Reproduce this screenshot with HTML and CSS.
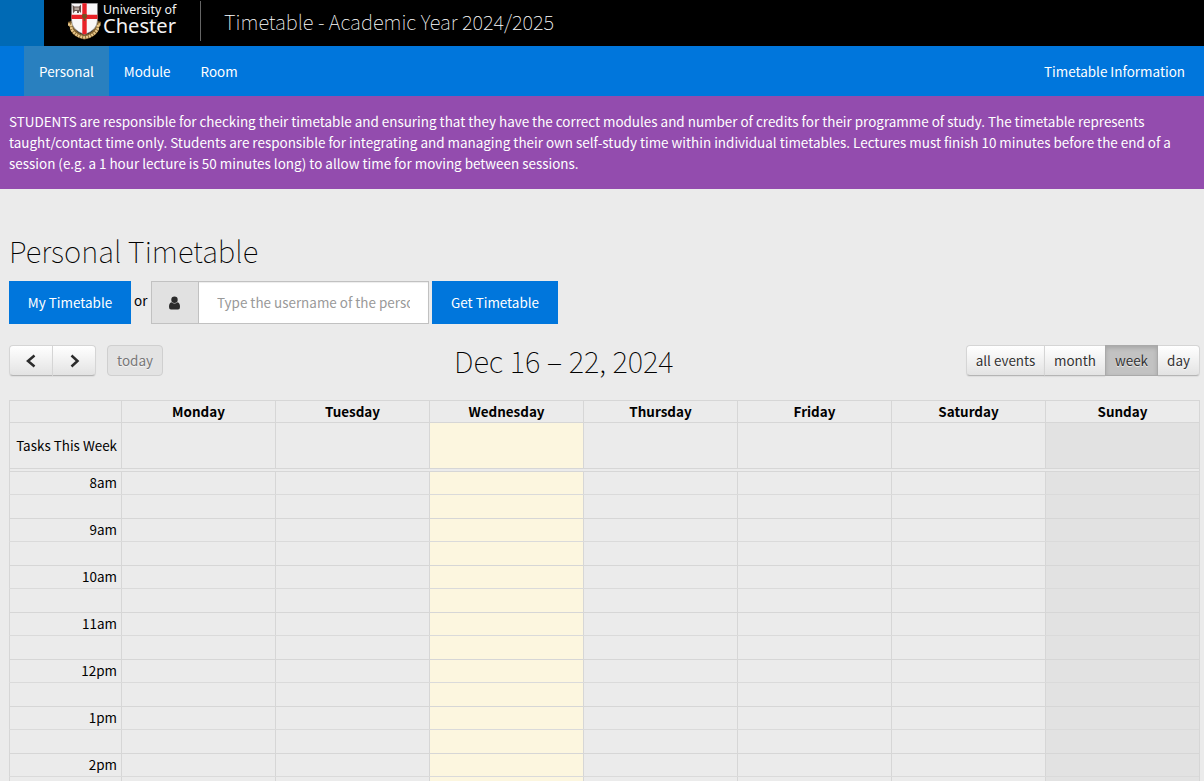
FILE: index.html
```
<!DOCTYPE html>
<html lang="en">
<head>
<meta charset="utf-8">
<title>Timetable - Academic Year 2024/2025</title>
<link rel="stylesheet" href="styles.css">
</head>
<body>
<header class="masthead">
  <div class="corner"></div>
  <div class="logo">
    <svg class="crest" width="36" height="38" viewBox="0 0 36 38">
      <path d="M1.500 21.500L5 20.500L5.500 26Q9 33 17.500 34Q26 33 29.500 26L30 20.500L33.500 21.500" fill="none" stroke="#80602f" stroke-width="5"/>
      <path d="M1 21.500L4 21.500L4.500 26.500Q9 33.500 17.500 34.500Q26 33.500 30.500 26.500L31 21.500L34 21.500" fill="none" stroke="#e9c98b" stroke-width="2.600" stroke-dasharray="2 .8"/>
      <path d="M4.500 .3H30.500V17Q30.500 27 17.500 31.500Q4.500 27 4.500 17Z" fill="#f8f7f8" stroke="#777" stroke-width=".6"/>
      <path d="M15.300 .3H19.700V30.700L17.500 31.500L15.300 30.700ZM4.500 11.800H30.500V16H4.500Z" fill="#e82127"/>
      <path d="M5.500 2L7.500 3.500H12L14 1.500V10L12 8V10H10V8H8L6 10.500Z" fill="#67554f"/>
      <path d="M7.500 4.500H12V7H7.500Z" fill="#b5a49b"/>
      <path d="M15.500 11H19.500L20 14L18.200 16V18H16.800V16L15 14Z" fill="#745323"/>
    </svg>
    <div class="wordmark"><span class="uni">University of</span><span class="chester">Chester</span></div>
  </div>
  <div class="site-title"><span class="t-site">Timetable - Academic Year 2024/2025</span></div>
</header>
<nav class="navbar">
  <a class="active">Personal</a><a>Module</a><a>Room</a><a class="info">Timetable Information</a>
</nav>
<div class="notice">
  <div class="n1">STUDENTS are responsible for checking their timetable and ensuring that they have the correct modules and number of credits for their programme of study. The timetable represents</div>
  <div>taught/contact time only. Students are responsible for integrating and managing their own self-study time within individual timetables. Lectures must finish 10 minutes before the end of a</div>
  <div>session (e.g. a 1 hour lecture is 50 minutes long) to allow time for moving between sessions.</div>
</div>
<main>
  <h1>Personal Timetable</h1>
  <form class="search">
    <button type="button" class="btn mine">My Timetable</button>
    <span class="or">or</span>
    <span class="addon"><svg width="12" height="14" viewBox="0 0 12 14"><circle cx="5.500" cy="3.700" r="3.200" fill="#2b2b2b"/><path d="M2.500 6.200Q0 6.600 0 11Q0 13.500 2 13.500H9Q11 13.500 11 11Q11 6.600 8.500 6.200Q5.500 9 2.500 6.200Z" fill="#2b2b2b"/></svg></span>
    <input type="text" placeholder="Type the username of the person">
    <button type="button" class="btn get">Get Timetable</button>
  </form>
  <div class="toolbar">
    <div class="group arrows">
      <button type="button" class="tb"><svg width="11" height="14" viewBox="0 0 11 14"><path d="M8.500 1.500L2 7L8.500 12.500" fill="none" stroke="#2b2b2b" stroke-width="2.500"/></svg></button>
      <button type="button" class="tb"><svg width="11" height="14" viewBox="0 0 11 14"><path d="M2.500 1.500L8.500 7L2.500 12.500" fill="none" stroke="#2b2b2b" stroke-width="2.500"/></svg></button>
    </div>
    <div class="group today"><button type="button" class="tb">today</button></div>
    <h2>Dec 16 – 22, 2024</h2>
    <div class="group views">
      <button type="button" class="tb v1">all events</button>
      <button type="button" class="tb v2">month</button>
      <button type="button" class="tb v3 on">week</button>
      <button type="button" class="tb v4">day</button>
    </div>
  </div>
  <div class="calendar" id="calendar"></div>
</main>
<script src="calendar.js"></script>
</body>
</html>
```
FILE: styles.css
```
* { box-sizing: border-box; }
body {
  margin: 0;
  height: 781px;
  overflow: hidden;
  background: #ebebeb;
  color: #000;
  font: 13.44px/21px "Noto Sans CJK SC", sans-serif;
}
h1, h2 { margin: 0; font-weight: 100; }
button, input { font: inherit; margin: 0; }

.masthead { display: flex; height: 46px; background: #000; color: #fff; }
.corner { width: 44px; background: #006ab5; }
.logo { display: flex; width: 156px; padding: 3px 0 0 23px; }
.crest { flex: none; }
.wordmark { display: flex; flex-direction: column; font-family: "Noto Sans", sans-serif; color: #f2f2f2; white-space: nowrap; }
.uni { font-size: 12.400px; line-height: 13px; }
.chester { font-size: 20.100px; line-height: 20px; }
.site-title {
  height: 40px;
  margin-top: 1px;
  padding-left: 23px;
  border-left: 1px solid #666;
  font-size: 20.150px;
  line-height: 42px;
  font-weight: 100;
}

.navbar { display: flex; height: 50px; padding: 0 4px 0 24px; background: #0076dc; color: #fff; line-height: 51px; }
.navbar a { padding: 0 15px; }
.navbar .active { background: #2980bf; }
.navbar .info { margin-left: auto; }

.notice { height: 93px; padding: 15px 9px; background: #934cae; color: #fff; white-space: nowrap; }

main { padding: 40px 4px 0 9px; }
h1 { font-size: 29.330px; line-height: 42px; }
.search { display: flex; height: 43px; margin-top: 10px; }
.btn { border: 0; padding: 0; background: #0076dc; color: #fff; }
.mine { width: 122px; }
.get { width: 126px; margin-left: 3px; }
.or { width: 20px; padding-left: 3px; line-height: 39px; }
.addon { display: flex; align-items: center; justify-content: center; width: 47px; border: 1px solid #c1c1c1; border-right: 0; background: #e1e1e1; }
.search input {
  width: 231px;
  padding: 0 18px;
  border: 1px solid #c1c1c1;
  border-radius: 0;
  background: #fff;
  box-shadow: inset 0 1px 1px rgba(0, 0, 0, .075);
}
.search input::placeholder { color: #999; opacity: 1; }

.toolbar { display: grid; grid-template-columns: 98px 56px 1fr 234px; height: 32px; margin-top: 21px; }
.toolbar h2 { padding-left: 291px; font-size: 29.330px; line-height: 30px; white-space: nowrap; }
.group { display: flex; height: 31px; }
.tb {
  display: flex;
  align-items: center;
  justify-content: center;
  height: 31px;
  padding: 0;
  border: 1px solid #d5d5d5;
  border-bottom-color: #b5b5b5;
  border-right-width: 0;
  background: linear-gradient(#fff, #e3e3e3);
  box-shadow: 0 1px 1px rgba(0, 0, 0, .06);
  color: #333;
  text-shadow: 0 1px 1px rgba(255, 255, 255, .75);
}
.tb:first-child { border-radius: 4px 0 0 4px; }
.tb:last-child { border-right-width: 1px; border-radius: 0 4px 4px 0; }
.arrows .tb { width: 43px; }
.arrows .tb:last-child { width: 44px; }
.today .tb:last-child { width: 56px; border-radius: 4px; background: #e3e3e3; border-color: #cfcfcf; color: #777; box-shadow: none; }
.v1 { width: 78px; }
.v2 { width: 61px; }
.v3 { width: 53px; }
.v4 { width: 42px; }
.tb.on { background: #c2c2c2; border-color: #aaa; box-shadow: inset 0 2px 4px rgba(0, 0, 0, .15); border-right-width: 1px; }
.v4 { border-left-width: 0; }

.calendar { margin-top: 23px; width: 1191px; border-right: 1px solid #d6d6d6; }
.row { display: grid; grid-template-columns: 112px repeat(7, 154px); border-top: 1px solid #d6d6d6; }
.row > div { border-left: 1px solid #d6d6d6; }
.head { height: 22px; font-weight: 700; text-align: center; line-height: 20px; }
.tasks { height: 46px; line-height: 44px; }
.gap { height: 3px; border-top: 1px solid #d6d6d6; border-left: 1px solid #d6d6d6; }
.hour { height: 23px; line-height: 21px; }
.half { height: 24px; border-top-color: #dadada; }
.row .label { padding-right: 4px; text-align: right; white-space: nowrap; }
.today-col { background: #fcf6df; }
.sun-col { background: #e2e2e2; }
```
FILE: calendar.js
```
const days = ["Monday", "Tuesday", "Wednesday", "Thursday", "Friday", "Saturday", "Sunday"];
const cells = days.map(d => `<div class="${d === "Wednesday" ? "today-col" : d === "Sunday" ? "sun-col" : ""}"></div>`).join("");
const row = (kind, label) => `<div class="row ${kind}"><div class="label"><span>${label}</span></div>${cells}</div>`;
let html = `<div class="row head"><div></div>${days.map(d => `<div><span>${d}</span></div>`).join("")}</div>`;
html += row("tasks", "Tasks This Week") + '<div class="gap"></div>';
for (const h of ["8am", "9am", "10am", "11am", "12pm", "1pm", "2pm"]) {
  html += row("hour", h) + row("half", "");
}
document.getElementById("calendar").innerHTML = html;
```
